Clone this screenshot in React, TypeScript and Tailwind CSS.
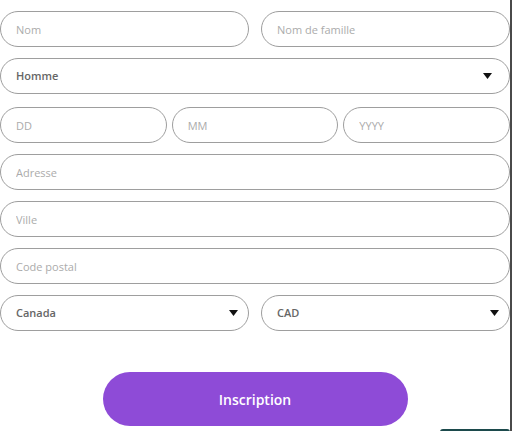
import React from 'react';

const font = { fontFamily: '"Open Sans", "Noto Sans", sans-serif' };

const Field: React.FC<{ placeholder: string }> = ({ placeholder }) => (
  <input
    placeholder={placeholder}
    className="h-[36px] w-full rounded-full border border-[#9e9e9e] bg-white pl-[15px] text-[11px] font-medium text-[#555] outline-none placeholder:text-[#ababab]"
  />
);

const Caret = () => (
  <svg width="9" height="6" viewBox="0 0 9 6" className="shrink-0">
    <path d="M0 0h9L4.5 6z" fill="#111" />
  </svg>
);

const Select: React.FC<{ value: string; pr: string }> = ({ value, pr }) => (
  <div
    className={`flex h-[36px] w-full items-center justify-between rounded-full border border-[#9e9e9e] bg-white pl-[15px] ${pr}`}
  >
    <span className="text-[11px] font-semibold text-[#666]">{value}</span>
    <Caret />
  </div>
);

export default function App() {
  return (
    <div className="min-h-[431px] w-[512px] border-r-2 border-[#4a4a4a] bg-white" style={font}>
      <div className="flex w-[510px] flex-col gap-[11px] pt-[11px]">
        <div className="grid grid-cols-2 gap-[12px]">
          <Field placeholder="Nom" />
          <Field placeholder="Nom de famille" />
        </div>
        <Select value="Homme" pr="pr-[17px]" />
        <div className="mt-[2px] grid grid-cols-3 gap-[5px]">
          <Field placeholder="DD" />
          <Field placeholder="MM" />
          <Field placeholder="YYYY" />
        </div>
        <Field placeholder="Adresse" />
        <Field placeholder="Ville" />
        <Field placeholder="Code postal" />
        <div className="grid grid-cols-2 gap-[12px]">
          <Select value="Canada" pr="pr-[10px]" />
          <Select value="CAD" pr="pr-[10px]" />
        </div>
      </div>
      <div className="mt-[41px] flex justify-center">
        <button className="h-[54px] w-[305px] rounded-full bg-[#8e4bd7] text-[14px] font-semibold text-white">
          Inscription
        </button>
      </div>
      <div className="mt-[3px] flex justify-end">
        <div className="h-[3px] w-[70px] rounded-t-full bg-[#1c4a4c]" />
      </div>
    </div>
  );
}
